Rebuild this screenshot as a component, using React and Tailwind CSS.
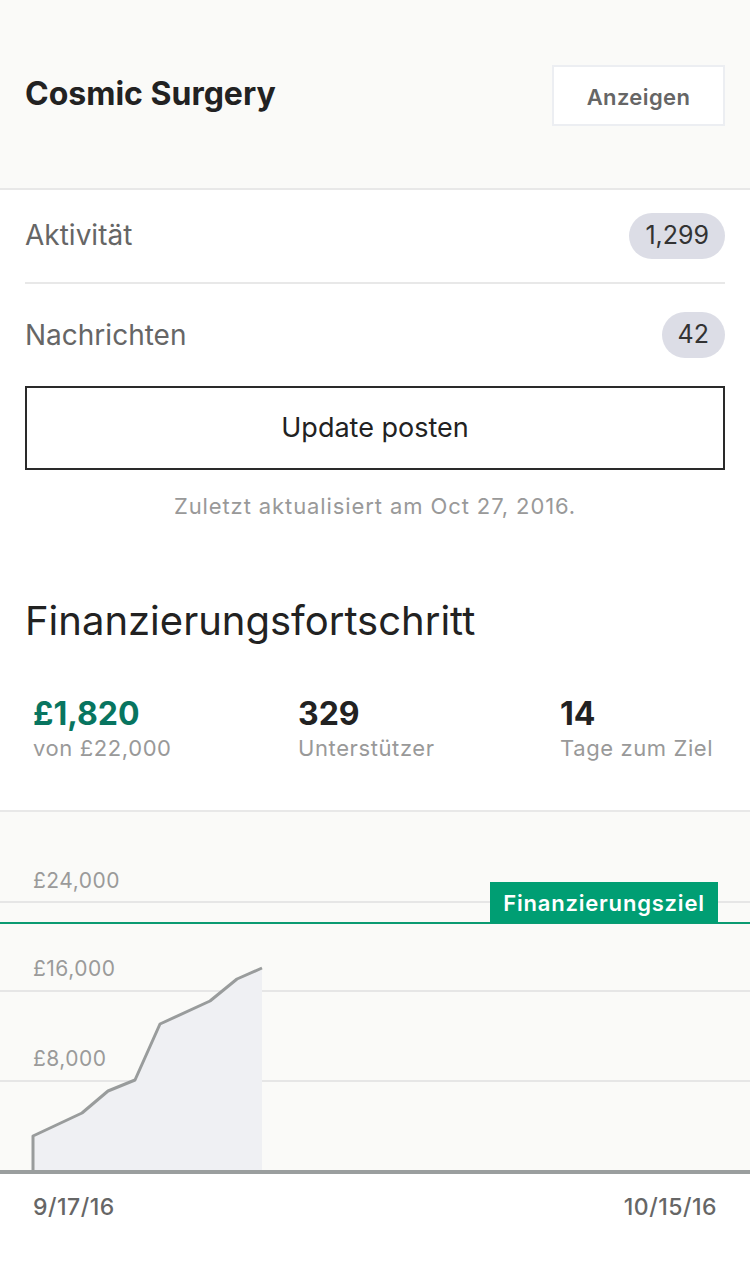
import React from 'react';

const font = { fontFamily: 'Inter, "Liberation Sans", Arial, sans-serif' };

const points = [
  [33, 358], [33, 324], [82, 301], [108, 279], [135, 268],
  [160, 212], [210, 189], [237, 167], [262, 156],
];

function Chart() {
  const line = points.map(p => p.join(',')).join(' ');
  const area = `${line} 262,358 33,358`;
  return (
    <div className="relative h-[362px] bg-[#fafaf8] border-t-2 border-[#e8e8e8]">
      <svg width="750" height="362" viewBox="0 0 750 362" className="absolute left-0 top-0">
        <line x1="0" y1="90" x2="750" y2="90" stroke="#e6e6e6" strokeWidth="2" />
        <line x1="0" y1="179" x2="750" y2="179" stroke="#e6e6e6" strokeWidth="2" />
        <line x1="0" y1="269" x2="750" y2="269" stroke="#e6e6e6" strokeWidth="2" />
        <polygon points={area} fill="#eff0f3" />
        <polyline points={line} fill="none" stroke="#999c9c" strokeWidth="3" strokeLinejoin="round" />
        <line x1="0" y1="111" x2="750" y2="111" stroke="#0a9b72" strokeWidth="2" />
        <rect x="490" y="70" width="228" height="41" fill="#009e73" />
        <text x="604" y="99" textAnchor="middle" fill="#fff" fontSize="22" fontWeight="600" letterSpacing="0.8" style={font}>Finanzierungsziel</text>
        <text x="33" y="76" fill="#9a9a9a" fontSize="21" letterSpacing="0.5" style={font}>£24,000</text>
        <text x="33" y="164" fill="#9a9a9a" fontSize="21" letterSpacing="0.5" style={font}>£16,000</text>
        <text x="33" y="254" fill="#9a9a9a" fontSize="21" letterSpacing="0.5" style={font}>£8,000</text>
        <rect x="0" y="358" width="750" height="4" fill="#9a9e9e" />
      </svg>
    </div>
  );
}

export default function App() {
  return (
    <div className="w-[750px] min-h-[1286px] bg-white" style={font}>
      <div className="h-[190px] bg-[#fafaf8] border-b-2 border-[#e8e8e8] flex items-center justify-between px-[25px]">
        <h1 className="text-[32px] font-bold text-[#222]">Cosmic Surgery</h1>
        <button className="w-[173px] h-[61px] bg-white border-2 border-[#eceef2] text-[22px] font-semibold tracking-[0.4px] text-[#666] mt-[2px] pt-[4px]">
          Anzeigen
        </button>
      </div>

      <div className="px-[25px]">
        <div className="h-[94px] flex items-center justify-between border-b-2 border-[#e8e8e8]">
          <span className="text-[28px] text-[#666] -mt-[3px]">Aktivität</span>
          <span className="h-[46px] px-[16px] rounded-full bg-[#dcdde6] text-[25px] text-[#333] flex items-center">1,299</span>
        </div>
        <div className="h-[102px] flex items-center justify-between">
          <span className="text-[28px] text-[#666]">Nachrichten</span>
          <span className="h-[46px] px-[16px] rounded-full bg-[#dcdde6] text-[25px] text-[#333] flex items-center">42</span>
        </div>
        <button className="w-full h-[84px] border-2 border-[#2a2a2a] text-[27px] text-[#222]">Update posten</button>
        <p className="text-center text-[22px] tracking-[0.9px] text-[#999] mt-[20px]">Zuletzt aktualisiert am Oct 27, 2016.</p>
        <h2 className="text-[40px] text-[#222] mt-[68px]">Finanzierungsfortschritt</h2>
      </div>

      <div className="flex pl-[33px] pt-[45px] h-[159px]">
        <div className="w-[265px]">
          <div className="text-[32px] font-bold text-[#087560] leading-[36px]">£1,820</div>
          <div className="text-[22px] tracking-[0.6px] text-[#999] leading-[32px]">von £22,000</div>
        </div>
        <div className="w-[262px]">
          <div className="text-[32px] font-bold text-[#222] leading-[36px]">329</div>
          <div className="text-[22px] tracking-[0.6px] text-[#999] leading-[32px]">Unterstützer</div>
        </div>
        <div>
          <div className="text-[32px] font-bold text-[#222] leading-[36px]">14</div>
          <div className="text-[22px] tracking-[0.6px] text-[#999] leading-[32px]">Tage zum Ziel</div>
        </div>
      </div>

      <Chart />

      <div className="flex justify-between px-[33px] pt-[18px] text-[23px] tracking-[0.5px] font-medium text-[#666]">
        <span>9/17/16</span>
        <span>10/15/16</span>
      </div>
    </div>
  );
}
